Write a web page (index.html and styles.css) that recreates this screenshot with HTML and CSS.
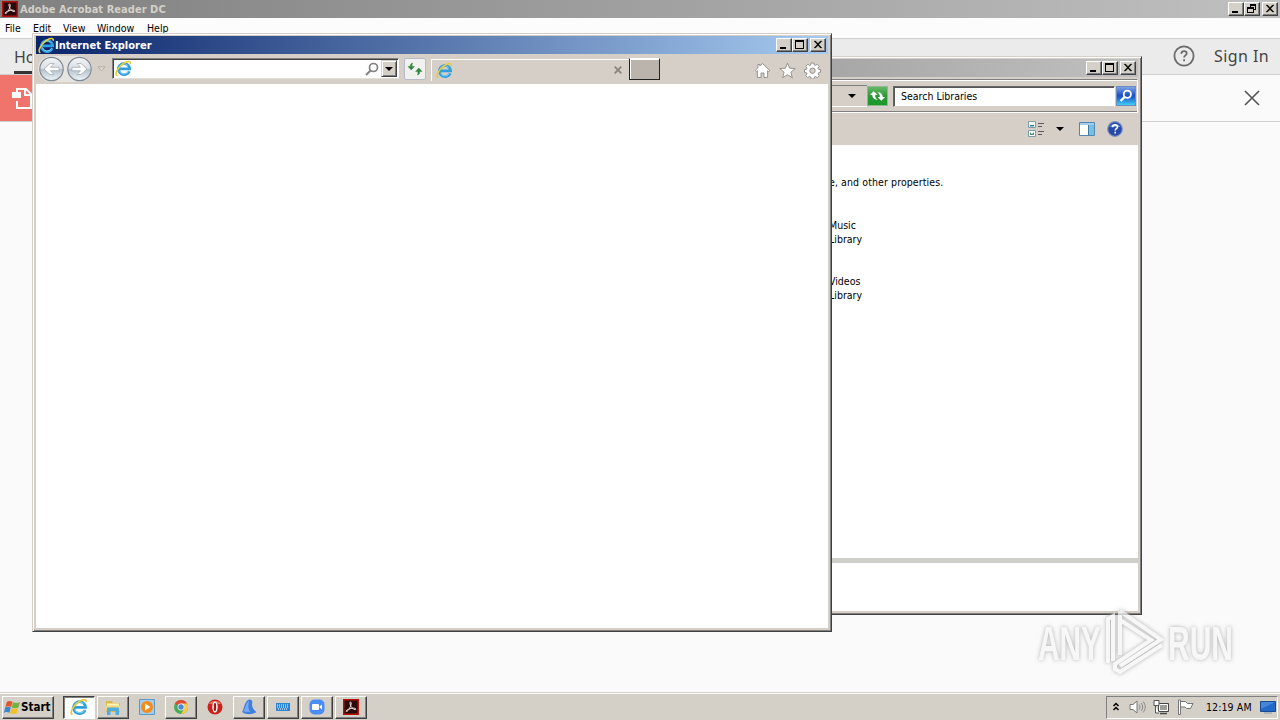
FILE: index.html
```html
<!DOCTYPE html>
<html lang="en">
<head>
  <meta charset="UTF-8">
  <meta name="viewport" content="width=device-width, initial-scale=1.0">
  <title>Desktop</title>
  <link rel="stylesheet" href="styles.css">
</head>
<body>

<!-- Shared icons -->
<svg class="defs" width="0" height="0">
  <symbol id="ie" viewBox="0 0 16 16">
    <path d="M13.400 10.600a5.300 5.300 0 1 1 .4-2.200H4.600" fill="none" stroke="#2f9fdd" stroke-width="2.500"/>
    <path d="M12.800 10.800a4.800 4.800 0 0 1-8.600-.6M4 7a4.700 4.700 0 0 1 8-2" fill="none" stroke="#7fd0f5" stroke-width=".9"/>
    <path d="M2.200 14.800C-1 13.600 3 6 9 2.600c3-1.700 5.800-1.800 5.400 1" fill="none" stroke="#ecca35" stroke-width="1.500"/>
  </symbol>
  <symbol id="acrobat" viewBox="0 0 16 16">
    <path d="M0 0h16v16H0z" fill="#b3120c"/>
    <path d="M1.500 1.500h13v13h-13z" fill="#2b0a0a"/>
    <path d="M7.400 3c1.600 0 .6 3.300-.6 5.800-1.200 2.400-3 4.400-3.600 3.600-.7-1 3-2.700 5.600-3.100 2.400-.4 4.400.1 4 1-.5 1-3.300-.5-4.600-2.500C7 5.700 6.600 3 7.400 3z" fill="none" stroke="#f3e6e6" stroke-width="1"/>
  </symbol>
  <symbol id="min" viewBox="0 0 16 14"><path d="M4 9h6v2H4z"/></symbol>
  <symbol id="max" viewBox="0 0 16 14"><path d="M3 2h9v9H3zM4 4v6h7V4z" fill-rule="evenodd"/></symbol>
  <symbol id="restore" viewBox="0 0 16 14"><path d="M6 2h6v6h-2v3H3V5h3zM7 4v1h3v2h1V4zM4 7v3h5V7z" fill-rule="evenodd"/></symbol>
  <symbol id="close" viewBox="0 0 16 14"><path d="M4 3h1.600l2.400 2.500L10.400 3H12L8.800 6.500 12 10h-1.600L8 7.500 5.600 10H4l3.200-3.500z" stroke="#000" stroke-width=".3"/></symbol>
</svg>

<div class="desktop">

  <!-- Adobe Acrobat Reader -->
  <div class="acrobat">
    <div class="titlebar titlebar-inactive">
      <svg class="acrobat-logo"><use href="#acrobat"/></svg>
      <span class="title-text">Adobe Acrobat Reader DC</span>
      <div class="controls">
        <span class="ctl"><svg><use href="#min"/></svg></span>
        <span class="ctl"><svg><use href="#restore"/></svg></span>
        <span class="ctl ctl-close"><svg><use href="#close"/></svg></span>
      </div>
    </div>
    <div class="menu">
      <span class="m-file">File</span><span class="m-edit">Edit</span><span class="m-view">View</span><span class="m-window">Window</span><span>Help</span>
    </div>
    <div class="acrobat-tabs">
      <span class="home-tab">Home</span>
      <svg class="help-ring" viewBox="0 0 22 22"><circle cx="11" cy="11" r="9.600"/><path d="M8.300 8.800c0-3.600 5.400-3.300 5.400-.3 0 1.900-2.600 1.900-2.600 4M11.100 14.300v1.900"/></svg>
      <span class="sign-in">Sign In</span>
    </div>
    <div class="acrobat-bar">
      <div class="pdf-tile">
        <svg viewBox="0 0 24 24"><path d="M7 6V3h9l5 5v14H7v-7M15 3v6h6" fill="none" stroke="#fff" stroke-width="2"/><path d="M2 6h9v6H2z" fill="#fff"/></svg>
      </div>
      <svg class="bar-close" viewBox="0 0 16 16"><path d="M1 1l14 14M15 1L1 15"/></svg>
    </div>
    <div class="acrobat-body"></div>
  </div>

  <!-- Libraries window -->
  <div class="window libraries">
    <div class="titlebar titlebar-inactive">
      <div class="controls">
        <span class="ctl"><svg><use href="#min"/></svg></span>
        <span class="ctl"><svg><use href="#max"/></svg></span>
        <span class="ctl ctl-close"><svg><use href="#close"/></svg></span>
      </div>
    </div>
    <div class="lib-nav">
      <div class="lib-path"><i class="tri"></i></div>
      <div class="lib-go">
        <svg viewBox="0 0 20 18"><path d="M2 8l4-4 4 4H7.500c0 3 1 4 3 5-4 0-6-2-6-5zM18 10l-4 4-4-4h2.500c0-3-1-4-3-5 4 0 6 2 6 5z" fill="#fff"/></svg>
      </div>
      <div class="lib-search">Search Libraries</div>
      <div class="lib-find">
        <svg viewBox="0 0 20 20"><circle cx="11.500" cy="8" r="4" fill="none" stroke="#fff" stroke-width="2"/><path d="M8.500 11L4 15.500" stroke="#fff" stroke-width="2.500"/></svg>
      </div>
    </div>
    <div class="lib-tools">
      <svg class="views-icon" viewBox="0 0 17 16"><path d="M.5.5h7v6h-7zM.5 9.500h7v6h-7z" fill="#fff" stroke="#7aa0a8"/><path d="M2 4h4v1.500H2z" fill="#267ba5"/><path d="M2 11l2 2 2-2v3H2z" fill="#5b9183"/><path d="M10 2.500h6M10 5.500h4M10 10.500h6M10 13.500h4" stroke="#5a5a5a"/></svg>
      <i class="tri"></i>
      <svg class="pane-icon" viewBox="0 0 16 14"><path d="M.5.5h15v13H.5z" fill="#fff" stroke="#4e86b5"/><path d="M1 1h14v2H1z" fill="#a7cbe8"/><path d="M10 3h5v10h-5z" fill="#7ac0de"/><path d="M9.500 3v10" stroke="#357ca6"/></svg>
      <svg class="help-icon" viewBox="0 0 16 16"><circle cx="8" cy="8" r="7.300" fill="#2749a8" stroke="#7d90bd" stroke-width="1.200"/><path d="M2.500 6a6 5 0 0 1 11 0z" fill="#6a8fdc"/><path d="M5.600 6.200c0-3.200 4.900-3 4.900-.3 0 1.700-2.300 1.700-2.300 3.500M8.200 10.800v1.700" fill="none" stroke="#fff" stroke-width="1.600"/></svg>
    </div>
    <div class="lib-body">
      <p class="lib-hint">e, and other properties.</p>
      <p class="lib-item">Music<br>Library</p>
      <p class="lib-item">Videos<br>Library</p>
    </div>
    <div class="lib-details"></div>
  </div>

  <!-- Internet Explorer window -->
  <div class="window browser">
    <div class="titlebar titlebar-active">
      <svg class="ie-logo"><use href="#ie"/></svg>
      <span class="title-text">Internet Explorer</span>
      <div class="controls">
        <span class="ctl"><svg><use href="#min"/></svg></span>
        <span class="ctl"><svg><use href="#max"/></svg></span>
        <span class="ctl ctl-close"><svg><use href="#close"/></svg></span>
      </div>
    </div>
    <div class="ie-bar">
      <svg class="ie-nav" viewBox="0 0 58 28">
        <defs>
          <linearGradient id="orb" x1="0" y1="0" x2="0" y2="1">
            <stop offset="0" stop-color="#f4f6f8"/><stop offset=".48" stop-color="#d9dee3"/><stop offset=".52" stop-color="#b6c0c9"/><stop offset="1" stop-color="#edf6fb"/>
          </linearGradient>
        </defs>
        <path d="M15 1h28a13 13 0 0 1 0 26H15a13 13 0 0 1 0-26z" fill="#e5e4e1"/>
        <circle cx="15.500" cy="14" r="11.700" fill="url(#orb)" stroke="#7f8992" stroke-width="1.200"/>
        <circle cx="43.500" cy="14" r="11.700" fill="url(#orb)" stroke="#7f8992" stroke-width="1.200"/>
        <path d="M23 12.300v3.400h-8.500l3.500 3.800h-4L8 14l6-5.500h4l-3.500 3.800zM36 12.300v3.400h8.500L41 19.500h4l6-5.500-6-5.500h-4l3.500 3.800z" fill="#fff" stroke="#9aa4ad" stroke-width=".7"/>
      </svg>
      <svg class="nav-drop" viewBox="0 0 9 6"><path d="M1 .8h7L4.500 5z" fill="#dedbd5" stroke="#a9a49c" stroke-width=".8"/></svg>
      <div class="address">
        <svg class="ie-small"><use href="#ie"/></svg>
        <svg class="search-icon" viewBox="0 0 14 14"><circle cx="8.500" cy="5.500" r="4" fill="none" stroke="#808080" stroke-width="1.700"/><path d="M5.500 8.500L1 13" stroke="#808080" stroke-width="2"/></svg>
        <span class="drop-btn"><i class="tri"></i></span>
      </div>
      <div class="refresh">
        <svg viewBox="0 0 16 14"><path d="M5.500 1C3.500 1.500 3.200 3 3.200 4.500H1l3.200 3.500 3.200-3.500H5.200C5 3 5 2 5.500 1zM10.500 13c2-.5 2.300-2 2.300-3.500H15L11.800 6 8.600 9.500h2.200c.2 1.500.2 2.500-.3 3.500z" fill="#35883b" stroke="#35883b" stroke-width=".5"/></svg>
      </div>
      <div class="tab">
        <svg class="ie-small"><use href="#ie"/></svg>
        <svg class="tab-close" viewBox="0 0 8 8"><path d="M.7.7l6.600 6.600M7.300.7L.7 7.300" stroke="#8a857f" stroke-width="1.900"/></svg>
      </div>
      <div class="new-tab"></div>
      <div class="ie-tools">
        <svg viewBox="0 0 17 17"><path d="M8.500 1.500l7.300 7-1.200 1.200-1-.9v6.700H10v-4.500H7v4.500H3.400V8.800l-1 .9L1.200 8.500l2.700-2.600V2.500h2v1.500z"/></svg>
        <svg viewBox="0 0 17 17"><path d="M8.500 1l2.100 5.200 5.600.4-4.300 3.600 1.400 5.500-4.800-3-4.800 3 1.400-5.500L.8 6.600l5.600-.4z"/></svg>
        <svg viewBox="0 0 17 17"><path fill-rule="evenodd" d="M7.100 1h2.800l.4 2 1.100.5 1.800-1.200 2 2-1.200 1.800.5 1.100 2 .4v2.800l-2 .4-.5 1.100 1.200 1.800-2 2-1.800-1.200-1.100.5-.4 2H7.100l-.4-2-1.100-.5-1.800 1.200-2-2L3 11.900l-.5-1.100-2-.4V7.600l2-.4L3 6.100 1.800 4.300l2-2 1.800 1.200L6.700 3zM8.500 6a2.700 2.700 0 1 0 0 5.400 2.700 2.700 0 0 0 0-5.400z"/></svg>
      </div>
    </div>
    <div class="ie-page"></div>
  </div>

  <!-- Watermark -->
  <svg class="watermark" viewBox="0 0 220 80">
    <text x="2" y="54" textLength="63" lengthAdjust="spacingAndGlyphs">ANY</text>
    <text x="132" y="54" textLength="65" lengthAdjust="spacingAndGlyphs">RUN</text>
    <path d="M72 57V13l5-3v45M84 5v44M84 5l41 28.500L84 60M84 14l31 20-36 24v5l5 3 42-27"/>
  </svg>

  <!-- Taskbar -->
  <div class="taskbar">
    <div class="start">
      <svg viewBox="0 0 18 16"><path d="M3 2.500c2-1 4-1 6 0L7.500 8c-2-1-4-1-6 0z" fill="#e2562a"/><path d="M9.500 3c2 1 4.500 1 7.500 0L15.200 8.500c-2 1-4.500 1-7.200 0z" fill="#76b043"/><path d="M1.200 8.500c2-1 4-1 6 0L5.800 14c-2-1-4-1-5.800 0z" fill="#3b86d0"/><path d="M7.800 9c2 1 4.500 1 7.200 0l-1.500 5.500c-2 1-4.500 1-7.200 0z" fill="#f3c02c"/></svg>
      <span>Start</span>
    </div>
    <div class="tasks">
      <div class="task task-active"><svg class="task-ie"><use href="#ie"/></svg></div>
      <div class="task">
        <svg viewBox="0 0 18 18"><path d="M2 3h6l1 2h7v9H2z" fill="#dcb94e"/><path d="M3 5.500h12v3H3z" fill="#fff3b8"/><path d="M2 7.500h14v5H2z" fill="#f1d67a"/><path d="M3 17v-6c0-1 .5-1.500 1.500-1.500h9c1 0 1.500.5 1.500 1.500v6h-3.500v-4h-5v4z" fill="#4faee0"/></svg>
      </div>
      <div class="task task-flat">
        <svg viewBox="0 0 18 18"><path d="M1.500 1.500h15v15h-15z" fill="#a5cdea" stroke="#5b9bcb"/><circle cx="9" cy="9" r="6" fill="#f38b1c"/><path d="M7 5.500l5.500 3.500L7 12.500z" fill="#fff"/></svg>
      </div>
      <div class="task">
        <svg viewBox="0 0 18 18"><circle cx="9" cy="9" r="7" fill="#4caa50"/><path d="M9 9L2.900 5.500A7 7 0 0 1 15.100 5.500z" fill="#df4937"/><path d="M9 5.500h6.100A7 7 0 0 1 9 16l3-5z" fill="#f6cb45"/><circle cx="9" cy="9" r="3.400" fill="#fff"/><circle cx="9" cy="9" r="2.700" fill="#4688e8"/></svg>
      </div>
      <div class="task task-flat">
        <svg viewBox="0 0 18 18"><circle cx="9" cy="9" r="7.500" fill="#c9221c"/><path d="M3 6a6.500 5 0 0 1 12 0z" fill="#e8736c"/><ellipse cx="9" cy="9" rx="2.700" ry="5.500" fill="#fff"/><ellipse cx="9" cy="9" rx="1.200" ry="4.300" fill="#a31612"/></svg>
      </div>
      <div class="task">
        <svg viewBox="0 0 18 18"><path d="M2 14C4 12.500 4 3 9 1.500c4 0 3.500 3 3 4.500 0 3.500 1.500 6 4.500 8-4 3-10.500 3-14.500 0z" fill="#3e7fe0"/><path d="M3 13.500C6 11 5 5 9 3c-1 4-1 8 1 11z" fill="#77aaf2"/></svg>
      </div>
      <div class="task">
        <svg viewBox="0 0 18 18"><path d="M2 5h14v8H2z" fill="#2c86d6"/><path d="M3 7h12M3 9h12M4 11h10" stroke="#fff" stroke-dasharray="1 1"/></svg>
      </div>
      <div class="task">
        <svg viewBox="0 0 18 18"><rect x="1.500" y="1.500" width="15" height="15" rx="5" fill="#4a8df4"/><rect x="4" y="6" width="7" height="6" rx="1" fill="#fff"/><path d="M11.500 8.500L14 6.500v5l-2.500-2z" fill="#fff"/></svg>
      </div>
      <div class="task"><svg class="task-acrobat"><use href="#acrobat"/></svg></div>
    </div>
    <div class="tray">
      <svg class="chevrons" viewBox="0 0 8 10"><path d="M1.500 4L4 1.500 6.500 4M1.500 8L4 5.500 6.500 8" fill="none" stroke="#000" stroke-width="1.500"/></svg>
      <svg class="speaker" viewBox="0 0 17 16"><path d="M1 5.500h3L8 2v12l-4-3.500H1z" fill="#fff" stroke="#777"/><path d="M10 5.500c1.300 1.500 1.300 3.500 0 5M12 4c2.200 2.500 2.200 5.500 0 8M14 2.500c3 3.500 3 7.500 0 11" fill="none" stroke="#888"/></svg>
      <svg class="network" viewBox="0 0 16 16"><path d="M5.500 4.500h10v8h-10z" fill="#9c9c98" stroke="#444"/><path d="M6.500 5.500h8v6h-8z" fill="none" stroke="#fff"/><path d="M7 14.500h7" stroke="#444" stroke-width="1.500"/><path d="M1 1.500h5v5H1zM2.500 6.500V14H6" fill="#fff" stroke="#555"/></svg>
      <svg class="flag" viewBox="0 0 17 16"><path d="M1.500 1v14.500h2V1zM3.500 2.500h5l2 2h5.500l-2.500 5H9.500l-1.500-1.500H3.500z" fill="#fff" stroke="#777"/></svg>
      <span class="clock">12:19 AM</span>
      <svg class="show-desktop" viewBox="0 0 16 14"><path d="M.5 1.500h15v10H.5z" fill="#2369c9" stroke="#174a91"/><path d="M1 2h14l-14 7z" fill="#4586d8"/><path d="M4 13h8" stroke="#8f98a3"/></svg>
    </div>
  </div>
</div>

</body>
</html>
```
FILE: styles.css
```css
* {
  box-sizing: border-box;
}

body {
  margin: 0;
  font-family: "DejaVu Sans Condensed", "DejaVu Sans", sans-serif;
  font-stretch: condensed;
  font-size: 10.5px;
  color: #000;
}

svg {
  display: block;
  flex: none;
}

p {
  margin: 0;
}

.defs {
  position: absolute;
}

.desktop {
  position: relative;
  display: flex;
  flex-direction: column;
  width: 1280px;
  height: 720px;
  overflow: hidden;
  background: #fafafa;
}

/* small black arrow */
.tri {
  width: 0;
  height: 0;
  border: 4px solid transparent;
  border-top-color: #000;
  border-bottom: 0;
}

/* Title bars */
.titlebar {
  display: flex;
  align-items: center;
  flex: none;
  height: 18px;
  padding: 0 2px;
  font-weight: bold;
  color: #fff;
}

.titlebar-active {
  background: linear-gradient(to right, #0a246a, #a6caf0);
}

.titlebar-inactive {
  background: linear-gradient(to right, #808080, #c0c0c0);
  color: #d4d0c8;
}

.title-text {
  font-size: 11px;
  letter-spacing: 0.05px;
  white-space: nowrap;
}

.controls {
  display: flex;
  margin-left: auto;
}

.ctl {
  width: 16px;
  height: 14px;
  background: #d4d0c8;
  border: 1px solid;
  border-color: #fff #404040 #404040 #fff;
  box-shadow: inset -1px -1px #808080;
}

.ctl svg {
  width: 16px;
  height: 14px;
  margin: -1px;
}

.ctl-close {
  margin-left: 2px;
}

/* Acrobat */
.acrobat {
  display: flex;
  flex-direction: column;
  flex: 1;
}

.acrobat-logo {
  width: 16px;
  height: 16px;
  margin-right: 2px;
}

.menu {
  display: flex;
  align-items: center;
  height: 20px;
  padding: 0 0 1px 5px;
  background: #fcfcfc;
}

.m-file { width: 28px; }
.m-edit { width: 30px; }
.m-view { width: 34px; }
.m-window { width: 50px; }

.acrobat-tabs {
  display: flex;
  align-items: center;
  height: 37px;
  padding: 0 11px 1px 14px;
  background: #ebebeb;
  border-top: 1px solid #cfcfcf;
  border-bottom: 1px solid #cfcfcf;
  font-family: "Noto Sans", sans-serif;
  font-size: 16px;
  color: #444;
}

.home-tab {
  height: 34px;
  margin-top: 1px;
  line-height: 34px;
  border-bottom: 3px solid #333;
}

.help-ring {
  width: 22px;
  height: 22px;
  margin-left: auto;
  fill: none;
  stroke: #6b6b6b;
  stroke-width: 1.8;
}

.sign-in {
  margin-left: 19px;
  letter-spacing: 0.4px;
}

.acrobat-bar {
  display: flex;
  align-items: center;
  height: 47px;
  border-bottom: 1px solid #cfcfcf;
}

.pdf-tile {
  width: 60px;
  height: 46px;
  padding: 11px 0 0 10px;
  background: #f0736c;
}

.pdf-tile svg {
  width: 24px;
  height: 24px;
}

.bar-close {
  width: 16px;
  height: 16px;
  margin: 0 20px 0 auto;
  stroke: #555;
  stroke-width: 1.6;
}

.acrobat-body {
  flex: 1;
  background: #fafafa;
}

/* Windows on the desktop */
.window {
  position: absolute;
  display: flex;
  flex-direction: column;
  background: #d5cfc7;
  border: 1px solid;
  border-color: #d5cfc7 #404040 #404040 #d5cfc7;
  box-shadow: inset 1px 1px #fff, inset -1px -1px #808080;
}

.libraries {
  left: 790px;
  top: 56px;
  width: 352px;
  height: 559px;
  padding: 2px 3px 3px;
}

.libraries .titlebar {
  background: linear-gradient(to right, #a4a4a4, #c0c0c0);
}

.lib-nav {
  display: flex;
  align-items: center;
  height: 34px;
  margin-top: 2px;
  padding-right: 1px;
  border: 1px solid;
  border-color: #808080 #fff #fff #808080;
  box-shadow: inset 0 1px #fff, inset 0 -1px #808080;
}

.lib-path {
  display: flex;
  align-items: center;
  justify-content: flex-end;
  flex: 1;
  height: 22px;
  padding-right: 11px;
  border-top: 1px solid #808080;
  border-bottom: 1px solid #fff;
}

.lib-go {
  width: 21px;
  height: 20px;
  border: 1px solid #8fb98f;
  background: linear-gradient(#66b866, #2d9638 50%, #18992a);
}

.lib-go svg {
  width: 19px;
  height: 18px;
}

.lib-search {
  width: 222px;
  height: 21px;
  margin: 0 0 0 5px;
  padding-left: 7px;
  line-height: 18px;
  background: #fff;
  border: 1px solid;
  border-color: #666 #fff #d4d0c8 #666;
  box-shadow: inset 1px 1px #555;
}

.lib-find {
  width: 20px;
  height: 20px;
  margin-left: 1px;
  border: 1px solid #6b8cc0;
  background: linear-gradient(#7da4e6, #1c4fc2 48%, #1f63d2 60%, #42cff5);
}

.lib-find svg {
  width: 18px;
  height: 18px;
}

.lib-tools {
  display: flex;
  align-items: center;
  justify-content: flex-end;
  height: 32px;
  padding-right: 15px;
}

.views-icon {
  width: 17px;
  height: 16px;
  margin-right: 11px;
}

.pane-icon {
  width: 16px;
  height: 14px;
  margin: 0 12px 0 15px;
}

.help-icon {
  width: 16px;
  height: 16px;
}

.lib-body {
  flex: 1;
  padding: 30px 0 0 35px;
  line-height: 14px;
  background: #fff;
}

.lib-hint {
  margin-bottom: 29px;
  letter-spacing: 0.1px;
}

.lib-item {
  margin-bottom: 28px;
}

.lib-details {
  height: 53px;
  background: #fff;
  border-top: 5px solid #d0d0ca;
}

/* Internet Explorer */
.browser {
  left: 32px;
  top: 33px;
  width: 800px;
  height: 599px;
  padding: 2px 3px 3px;
}

.ie-logo {
  width: 17px;
  height: 17px;
}

.ie-bar {
  display: flex;
  align-items: center;
  height: 30px;
}

.ie-nav {
  width: 58px;
  height: 28px;
}

.nav-drop {
  width: 9px;
  height: 6px;
  margin: 0 6px 0 3px;
}

.address {
  display: flex;
  align-items: center;
  width: 287px;
  height: 21px;
  margin-bottom: 1px;
  padding: 0 1px 0 2px;
  background: #fff;
  border: 1px solid;
  border-color: #808080 #fff #e4e0d8 #808080;
  box-shadow: inset 1px 1px #404040;
}

.ie-small {
  width: 17px;
  height: 17px;
}

.search-icon {
  width: 14px;
  height: 14px;
  margin: 0 2px 0 auto;
}

.drop-btn {
  display: flex;
  align-items: center;
  justify-content: center;
  width: 16px;
  height: 17px;
  background: #d4d0c8;
  border: 1px solid;
  border-color: #d4d0c8 #404040 #404040 #d4d0c8;
  box-shadow: inset 1px 1px #fff, inset -1px -1px #808080;
}

.refresh {
  display: flex;
  align-items: center;
  justify-content: center;
  width: 22px;
  height: 22px;
  margin-left: 5px;
  background: #f1f1ef;
  border: 1px solid #b8bcc8;
  border-radius: 2px;
}

.refresh svg {
  width: 16px;
  height: 14px;
}

.tab {
  display: flex;
  align-items: center;
  align-self: flex-end;
  width: 198px;
  height: 25px;
  margin-left: 5px;
  padding: 0 7px 4px 5px;
  border-top: 1px solid #fff;
}

.tab::before {
  content: "";
  align-self: flex-start;
  width: 1px;
  height: 21px;
  margin-left: -5px;
  margin-right: 4px;
  background: #fff;
}

.tab-close {
  width: 8px;
  height: 8px;
  margin-left: auto;
}

.new-tab {
  width: 31px;
  height: 22px;
  background: #bab4ac;
  border: 1px solid;
  border-color: #fff #222 #222 #222;
  box-shadow: inset 1px 1px #fff;
}

.ie-tools {
  display: flex;
  gap: 8px;
  margin: 3px 7px 0 auto;
}

.ie-tools svg {
  width: 17px;
  height: 17px;
  fill: #fff;
  stroke: #8d8983;
  stroke-width: 0.9;
}

.ie-page {
  flex: 1;
  background: #fff;
}

/* Watermark */
.watermark {
  position: absolute;
  left: 1036px;
  top: 606px;
  width: 220px;
  height: 80px;
  filter: drop-shadow(0 0 2px #999);
  opacity: 0.75;
}

.watermark text {
  font-family: "Liberation Sans", sans-serif;
  font-size: 49px;
  font-weight: bold;
  fill: #f6f6f6;
}

.watermark path {
  fill: none;
  stroke: #f6f6f6;
  stroke-width: 4;
}

/* Taskbar */
.taskbar {
  display: flex;
  align-items: center;
  height: 28px;
  padding: 2px 2px 0;
  background: #d4d0c8;
  box-shadow: inset 0 1px #d4d0c8, inset 0 2px #fff;
}

.start {
  display: flex;
  align-items: center;
  width: 52px;
  height: 23px;
  padding-left: 1px;
  font-size: 11.5px;
  font-weight: bold;
  border: 1px solid;
  border-color: #fff #404040 #404040 #fff;
  box-shadow: inset -1px -1px #808080;
}

.start svg {
  width: 17px;
  height: 16px;
}

.tasks {
  display: flex;
  gap: 2px;
  margin-left: 9px;
}

.task {
  display: flex;
  align-items: center;
  justify-content: center;
  width: 32px;
  height: 23px;
  border: 1px solid;
  border-color: #fff #404040 #404040 #fff;
  box-shadow: inset -1px -1px #808080;
}

.task svg {
  width: 18px;
  height: 18px;
}

.task-active {
  background: #fff;
  border-color: #404040 #fff #fff #404040;
  box-shadow: inset 1px 1px #808080;
}

.task-flat {
  border-color: transparent;
  box-shadow: none;
}

.task .task-acrobat {
  width: 16px;
  height: 16px;
}

.tray {
  display: flex;
  align-items: center;
  width: 172px;
  height: 23px;
  margin-left: auto;
  padding-left: 5px;
  border: 1px solid;
  border-color: #808080 #fff #fff #808080;
}

.chevrons {
  width: 8px;
  height: 10px;
  margin-right: 9px;
}

.speaker {
  width: 17px;
  height: 16px;
  margin-right: 7px;
}

.network {
  width: 16px;
  height: 16px;
  margin-right: 8px;
}

.flag {
  width: 17px;
  height: 16px;
  margin-right: 12px;
}

.clock {
  width: 47px;
  letter-spacing: 0.1px;
  white-space: nowrap;
}

.show-desktop {
  width: 16px;
  height: 14px;
  margin-left: 7px;
}
```
